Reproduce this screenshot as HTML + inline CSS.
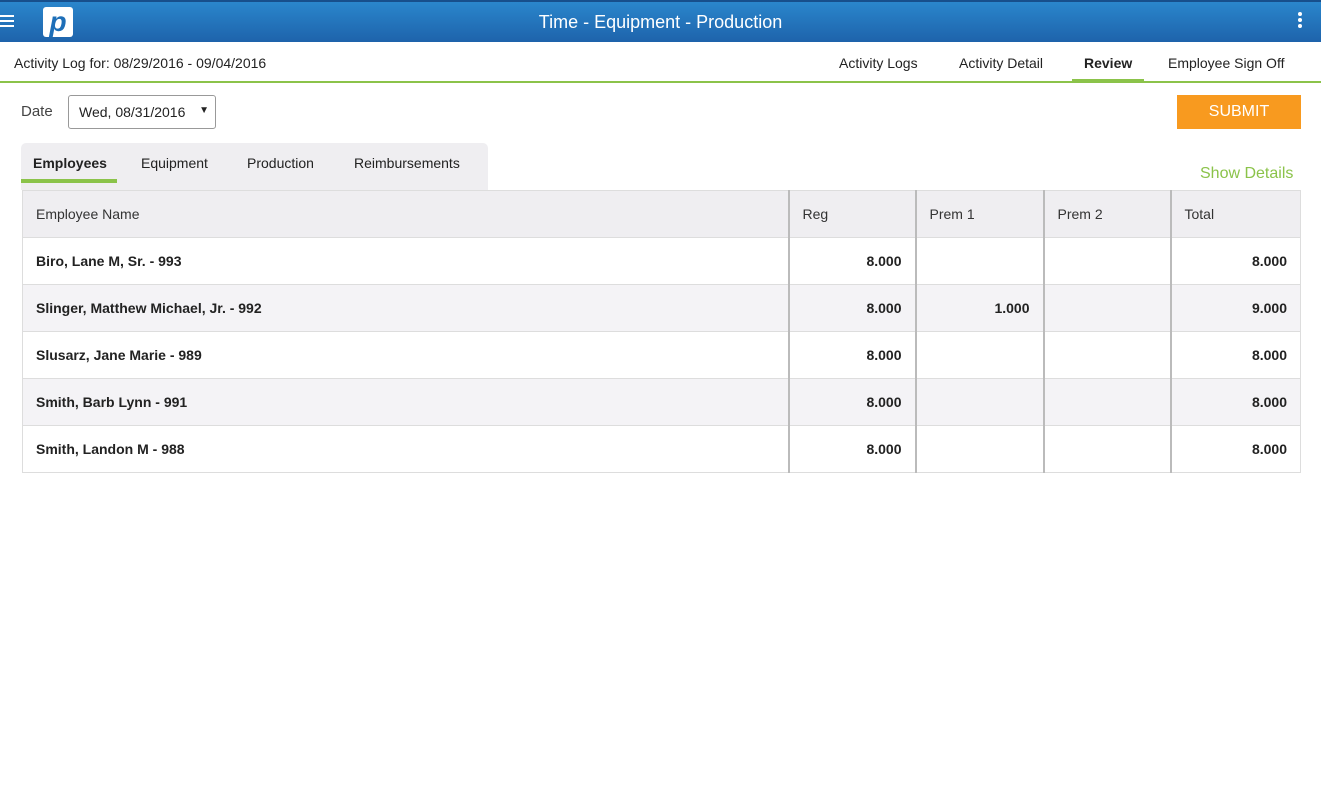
<!DOCTYPE html><html><head><meta charset="utf-8"><style>
*{box-sizing:border-box;margin:0;padding:0}
body{width:1321px;height:800px;background:#fff;font-family:"Liberation Sans",Arial,sans-serif;color:#222;position:relative;overflow:hidden}
.hdr{position:absolute;left:0;top:0;width:1321px;height:42px;background:linear-gradient(#2a86cc,#1e63ab);border-top:2px solid #174f8c}
.hdr .t{position:absolute;left:0;right:0;top:10px;text-align:center;color:#fff;font-size:18px}
.abs{position:absolute}
.sub{position:absolute;top:42px;left:0;width:1321px;height:41px;border-bottom:2px solid #8bc34a}
.nav{position:absolute;top:55px;font-size:14px;color:#222}
table{position:absolute;left:22px;top:190px;border-collapse:collapse;font-size:14px}
td{border:1px solid #ddd;height:47px;padding:0 13px}
tr.h td{background:#efeef1;color:#333}
tr.g td{background:#f4f3f6}
td.n{text-align:right;font-weight:bold}
td.b{font-weight:bold}
td.v{border-left:2px solid #bbb}
</style></head><body>
<div class="hdr">
<div class="abs" style="left:0;top:13px;width:14px;height:2px;background:#fff;box-shadow:0 5px 0 #fff,0 10px 0 #fff"></div>
<div class="abs" style="left:43px;top:5px;width:30px;height:30px;background:#fff;border-radius:3px;color:#1e6fb8;font-weight:bold;font-size:28px;line-height:30px;text-align:center;font-style:italic">p</div>
<div class="t">Time - Equipment - Production</div>
<div class="abs" style="left:1298px;top:10px;width:4px;height:4px;border-radius:2px;background:#fff;box-shadow:0 6px 0 #fff,0 12px 0 #fff"></div>
</div>
<div class="sub"></div>
<div class="nav" style="left:14px">Activity Log for: 08/29/2016 - 09/04/2016</div>
<div class="nav" style="left:839px">Activity Logs</div>
<div class="nav" style="left:959px">Activity Detail</div>
<div class="nav" style="left:1084px;font-weight:bold">Review</div>
<div class="abs" style="left:1072px;top:79px;width:72px;height:4px;background:#8bc34a"></div>
<div class="nav" style="left:1168px">Employee Sign Off</div>
<div class="abs" style="left:21px;top:103px;font-size:15px;color:#444">Date</div>
<div class="abs" style="left:68px;top:95px;width:148px;height:34px;border:1px solid #999;border-radius:3px;font-size:14px;padding:8px 10px">Wed, 08/31/2016 <span style="position:absolute;right:6px;top:9px;font-size:10px">▼</span></div>
<div class="abs" style="left:1177px;top:95px;width:124px;height:34px;background:#f89a1f;color:#fff;font-size:16px;text-align:center;line-height:34px">SUBMIT</div>
<div class="abs" style="left:21px;top:143px;width:467px;height:47px;background:#efeef1;border-radius:5px 5px 0 0"></div>
<div class="abs" style="left:33px;top:155px;font-size:14px;font-weight:bold">Employees</div>
<div class="abs" style="left:21px;top:179px;width:96px;height:4px;background:#8bc34a"></div>
<div class="abs" style="left:141px;top:155px;font-size:14px">Equipment</div>
<div class="abs" style="left:247px;top:155px;font-size:14px">Production</div>
<div class="abs" style="left:354px;top:155px;font-size:14px">Reimbursements</div>
<div class="abs" style="left:1200px;top:165px;font-size:16px;color:#8bc34a">Show Details</div>
<table>
<tr class="h"><td style="width:766px">Employee Name</td><td class="v" style="width:127px">Reg</td><td class="v" style="width:128px">Prem 1</td><td class="v" style="width:127px">Prem 2</td><td class="v" style="width:130px">Total</td></tr>
<tr><td class="b">Biro, Lane M, Sr. - 993</td><td class="n v">8.000</td><td class="v"></td><td class="v"></td><td class="n v">8.000</td></tr>
<tr class="g"><td class="b">Slinger, Matthew Michael, Jr. - 992</td><td class="n v">8.000</td><td class="n v">1.000</td><td class="v"></td><td class="n v">9.000</td></tr>
<tr><td class="b">Slusarz, Jane Marie - 989</td><td class="n v">8.000</td><td class="v"></td><td class="v"></td><td class="n v">8.000</td></tr>
<tr class="g"><td class="b">Smith, Barb Lynn - 991</td><td class="n v">8.000</td><td class="v"></td><td class="v"></td><td class="n v">8.000</td></tr>
<tr><td class="b">Smith, Landon M - 988</td><td class="n v">8.000</td><td class="v"></td><td class="v"></td><td class="n v">8.000</td></tr>
</table>
</body></html>
